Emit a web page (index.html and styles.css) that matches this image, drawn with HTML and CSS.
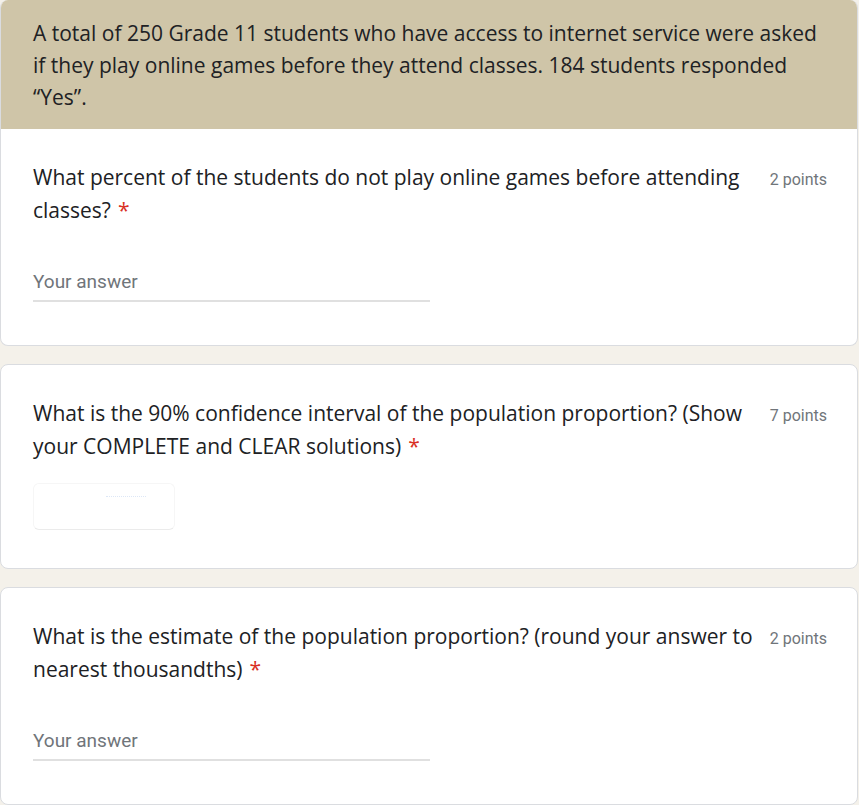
FILE: index.html
```html
<!DOCTYPE html>
<html lang="en">
<head>
<meta charset="utf-8">
<title>Form</title>
<link rel="stylesheet" href="styles.css">
</head>
<body>
<div class="form">
  <section class="card card-first">
    <div class="banner">A total of 250 Grade 11 students who have access to internet service were asked if they play online games before they attend classes. 184 students responded “Yes”.</div>
    <div class="body">
      <div class="q-head">
        <div class="q-title">What percent of the students do not play online games before attending classes?<span class="req">*</span></div>
        <div class="points">2 points</div>
      </div>
      <div class="answer">Your answer</div>
    </div>
  </section>

  <section class="card">
    <div class="body body-upload">
      <div class="q-head">
        <div class="q-title">What is the 90% confidence interval of the population proportion? (Show your COMPLETE and CLEAR solutions)<span class="req">*</span></div>
        <div class="points">7 points</div>
      </div>
      <div class="upload"><span class="dots"></span></div>
    </div>
  </section>

  <section class="card">
    <div class="body">
      <div class="q-head">
        <div class="q-title">What is the estimate of the population proportion? (round your answer to nearest thousandths)<span class="req">*</span></div>
        <div class="points">2 points</div>
      </div>
      <div class="answer">Your answer</div>
    </div>
  </section>
</div>
</body>
</html>
```

FILE: styles.css
```css
html, body {
  margin: 0;
  padding: 0;
  background: #f4f1ea;
}

.form {
  width: 858px;
  display: flex;
  flex-direction: column;
  gap: 18px;
}

.card {
  background: #ffffff;
  border: 1px solid #dadce0;
  border-radius: 8px;
  overflow: hidden;
}

.card-first {
  border-top: none;
}

.banner {
  background: #cfc5a8;
  color: #202124;
  font-family: "Open Sans", "Liberation Sans", sans-serif;
  font-size: 21px;
  line-height: 32px;
  padding: 17px 30px 16px 32px;
}

.body {
  padding: 32px 30px 43px 32px;
}

.body-upload {
  padding-bottom: 38px;
}

.q-head {
  display: flex;
  align-items: flex-start;
}

.q-title {
  flex: 1;
  color: #202124;
  font-family: "Open Sans", "Liberation Sans", sans-serif;
  font-size: 21px;
  line-height: 33px;
}

.req {
  color: #d93025;
  margin-left: 7px;
}

.points {
  margin-left: 12px;
  padding-top: 7px;
  color: #70757a;
  font-family: Roboto, "Liberation Sans", sans-serif;
  font-size: 16px;
  line-height: 24px;
  white-space: nowrap;
}

.answer {
  width: 397px;
  margin-top: 43px;
  padding-bottom: 6px;
  border-bottom: 2px solid #e0e0e0;
  color: #70757a;
  font-family: Roboto, "Liberation Sans", sans-serif;
  font-size: 19px;
  line-height: 24px;
}

.upload {
  width: 140px;
  height: 45px;
  margin-top: 20px;
  border: 1px solid #f6f6f6;
  border-bottom-color: #ebebeb;
  border-radius: 6px;
  position: relative;
}

.dots {
  position: absolute;
  left: 72px;
  top: 12px;
  width: 40px;
  height: 1px;
  border-top: 1px dotted #dde7f6;
}
```
